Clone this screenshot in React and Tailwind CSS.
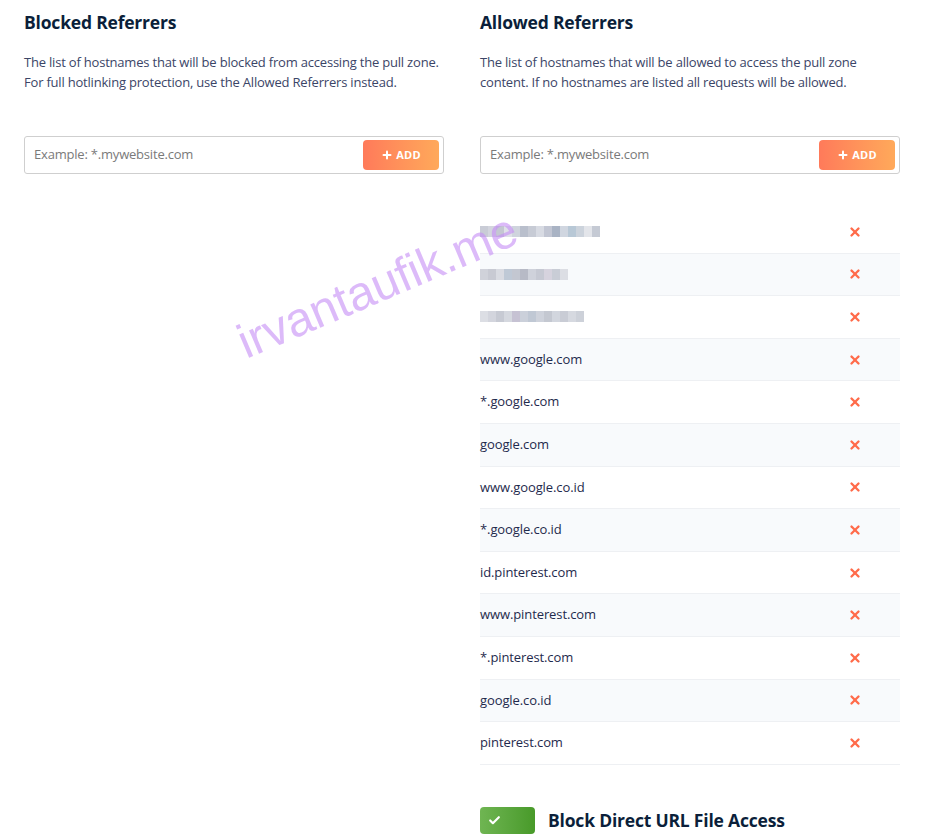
import { Check, Plus, X } from "lucide-react";

const hosts = [
  { blur: ["#c9ccd6", "#d3d5de", "#c4c7d2", "#dfe1e8", "#cfd4dd", "#b9bfcc", "#c7cbd5", "#d8dbe3", "#c2c6d3", "#a9b3c4", "#d0d6e0", "#b8c8d6", "#ccd3dc", "#e3e5ea", "#c5cad4"] },
  { blur: ["#d0d2da", "#c8cad3", "#d9dbe2", "#bfc9d6", "#c3c7d1", "#b7bac6", "#cfd2db", "#c6c9d3", "#d6d3de", "#c9cdd6", "#dcdee4"] },
  { blur: ["#dcdee4", "#d3d5dd", "#c7cad3", "#d5d8df", "#c6c2d3", "#cbd0da", "#c0c8d4", "#ced2db", "#c4c8d1", "#d2d6de", "#c9ccd5", "#d6d9e0", "#cdd1d9"] },
  { name: "www.google.com" },
  { name: "*.google.com" },
  { name: "google.com" },
  { name: "www.google.co.id" },
  { name: "*.google.co.id" },
  { name: "id.pinterest.com" },
  { name: "www.pinterest.com" },
  { name: "*.pinterest.com" },
  { name: "google.co.id" },
  { name: "pinterest.com" },
];

function AddInput() {
  return (
    <div className="flex h-[38px] items-center rounded-[3px] border border-[#cfcfcf] bg-white pl-[9px] pr-[4px]">
      <input
        className="min-w-0 flex-1 bg-transparent text-[13px] tracking-[-0.2px] text-[#333] outline-none placeholder:text-[#7a7a7a]"
        placeholder="Example: *.mywebsite.com"
      />
      <button className="flex h-[30px] w-[76px] items-center justify-center gap-[3px] rounded-[4px] bg-gradient-to-r from-[#ff7a5a] to-[#ffa95a] text-[11px] font-bold tracking-wide text-white">
        <Plus size={12} strokeWidth={4} />
        ADD
      </button>
    </div>
  );
}

function Section({ title, lines }) {
  return (
    <div>
      <h2 className="pt-[10px] text-[17.5px] font-bold leading-[24px] tracking-[-0.2px] text-[#0b1f3a]">{title}</h2>
      <p className="mt-[18px] whitespace-nowrap text-[13px] leading-[20px] tracking-[-0.2px] text-[#3b4567]">
        {lines[0]}
        <br />
        {lines[1]}
      </p>
      <div className="mt-[44px]">
        <AddInput />
      </div>
    </div>
  );
}

export default function App() {
  return (
    <div className="relative min-h-[840px] overflow-hidden bg-white font-['Open_Sans','Noto_Sans',sans-serif]">
      <div className="grid grid-cols-[420px_420px] gap-x-[36px] pl-[24px]">
        <Section
          title="Blocked Referrers"
          lines={[
            "The list of hostnames that will be blocked from accessing the pull zone.",
            "For full hotlinking protection, use the Allowed Referrers instead.",
          ]}
        />
        <div>
          <Section
            title="Allowed Referrers"
            lines={[
              "The list of hostnames that will be allowed to access the pull zone",
              "content. If no hostnames are listed all requests will be allowed.",
            ]}
          />
          <ul className="mt-[37px]">
            {hosts.map((h, i) => (
              <li
                key={i}
                className={
                  "flex h-[42.6px] items-center justify-between border-b border-[#eef0f3] pr-[38px] " +
                  (i % 2 === 1 ? "bg-[#f8fafc]" : "bg-white")
                }
              >
                {h.name ? (
                  <span className="text-[13px] tracking-[-0.1px] text-[#1f2a4d]">{h.name}</span>
                ) : (
                  <span className="flex h-[11px]">
                    {h.blur.map((c, j) => (
                      <span key={j} className="h-full w-[8px]" style={{ backgroundColor: c }} />
                    ))}
                  </span>
                )}
                <X size={14} strokeWidth={4} className="text-[#ff6b4a]" />
              </li>
            ))}
          </ul>
          <div className="mt-[42px] flex items-center gap-[13px]">
            <div className="flex h-[27px] w-[55px] items-center rounded-[4px] bg-gradient-to-r from-[#6fb552] to-[#489a29] pl-[8px]">
              <Check size={13} strokeWidth={4} className="text-white" />
            </div>
            <span className="text-[17.5px] font-bold tracking-[-0.2px] text-[#0b1f3a]">Block Direct URL File Access</span>
          </div>
        </div>
      </div>
      <div className="pointer-events-none absolute left-[228px] top-[262px] -rotate-[23deg] font-['Liberation_Sans',Arial,sans-serif] text-[48px] leading-none text-[#c58cf5]/60">
        irvantaufik.me
      </div>
    </div>
  );
}
